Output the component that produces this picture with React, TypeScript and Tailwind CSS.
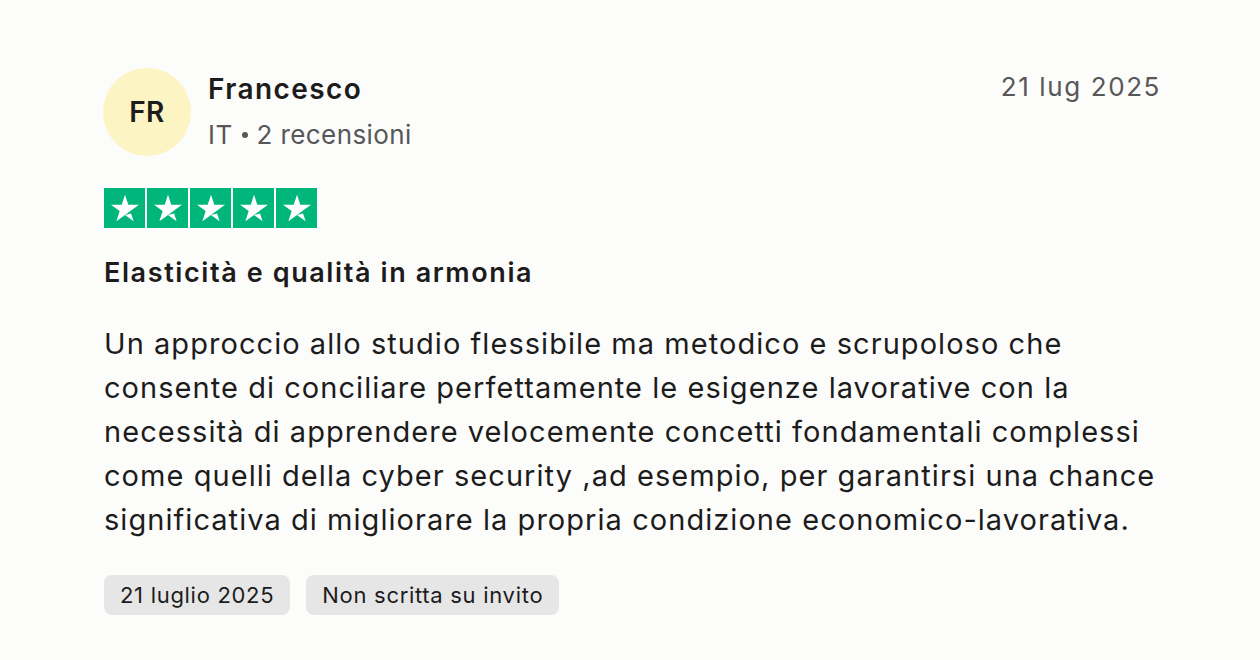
import React from 'react';

const font = { fontFamily: 'Inter, "Noto Sans", sans-serif' };

const Star = () => (
  <div className="flex h-10 w-[41px] items-center justify-center bg-[#00b67a]">
    <svg viewBox="0 0 96 96" className="h-10 w-10">
      <path d="M81.6 40.4H55.9L48 16.2L40.1 40.4H14.4L35.2 55.4L27.3 79.6L48.1 64.6L60.9 55.4L81.6 40.4Z" fill="#fff" />
      <path d="M48 64.7L62.6 61L68.7 79.8L48 64.7Z" fill="#fff" />
    </svg>
  </div>
);

const lines = [
  'Un approccio allo studio flessibile ma metodico e scrupoloso che',
  'consente di conciliare perfettamente le esigenze lavorative con la',
  'necessità di apprendere velocemente concetti fondamentali complessi',
  'come quelli della cyber security ,ad esempio, per garantirsi una chance',
  'significativa di migliorare la propria condizione economico-lavorativa.',
];

export default function App() {
  return (
    <div className="min-h-screen w-full bg-[#fcfcfb] text-[#1c1c1c]" style={font}>
      <div className="w-[1161px] pl-[104px] pt-[68px]">
        <div className="flex items-start">
          <div className="-ml-px flex h-[88px] w-[88px] shrink-0 items-center justify-center rounded-full bg-[#fdf4c4] text-[28px] font-semibold tracking-[0.5px] text-[#1c1c1c]">
            FR
          </div>
          <div className="ml-[17px] flex flex-1 flex-col">
            <div className="flex items-start justify-between">
              <div className="mt-[2px] text-[28px] font-semibold leading-[38px] tracking-[1.4px]">Francesco</div>
              <div className="mt-[1px] text-[26px] leading-[36px] tracking-[1.6px] text-[#575757]">21 lug 2025</div>
            </div>
            <div className="mt-[9px] flex items-center text-[26px] leading-[36px] tracking-[0.4px] text-[#575757]">
              <span>IT</span>
              <span className="mx-[9px] h-[6px] w-[6px] rounded-full bg-[#575757]" />
              <span>2 recensioni</span>
            </div>
          </div>
        </div>

        <div className="mt-[32px] flex gap-[2px]">
          <Star />
          <Star />
          <Star />
          <Star />
          <Star />
        </div>

        <div className="mt-[27px] text-[27px] font-semibold leading-[36px] tracking-[1.6px]">
          Elasticità e qualità in armonia
        </div>

        <div className="mt-[31px] text-[29px] leading-[44px] tracking-[1.05px]">
          {lines.map((l) => (
            <div key={l} className="whitespace-nowrap">{l}</div>
          ))}
        </div>

        <div className="mt-[33px] flex gap-4">
          <span className="rounded-lg bg-[#e6e6e6] px-4 py-[5px] text-[22px] leading-[30px] tracking-[0.7px]">21 luglio 2025</span>
          <span className="rounded-lg bg-[#e6e6e6] px-4 py-[5px] text-[22px] leading-[30px] tracking-[0.7px]">Non scritta su invito</span>
        </div>
      </div>
    </div>
  );
}
